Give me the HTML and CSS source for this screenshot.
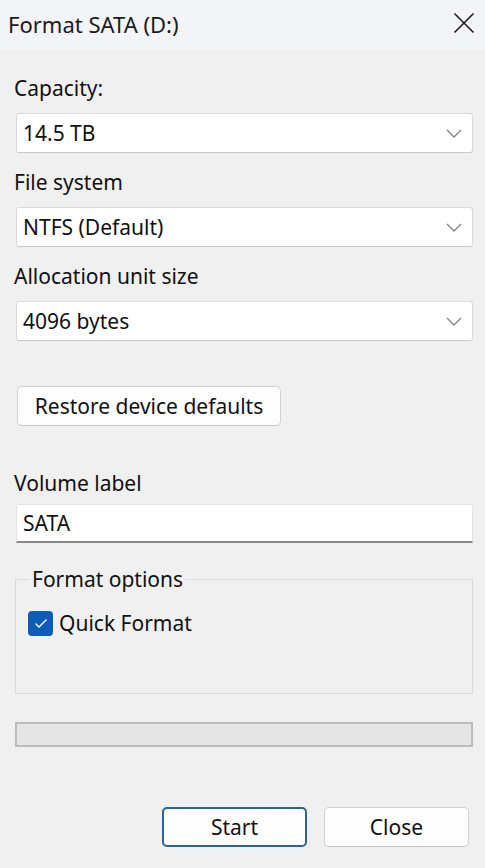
FILE: index.html
```html
<!DOCTYPE html>
<html lang="en">
<head>
<meta charset="utf-8">
<title>Format SATA (D:)</title>
<link rel="stylesheet" href="styles.css">
</head>
<body>
<div class="dialog">
  <header class="titlebar">
    <span class="title">Format SATA (D:)</span>
    <span class="close-x" aria-label="Close">
      <svg width="22" height="22" viewBox="0 0 22 22"><path d="M1.5 1.5 L20.5 20.5 M20.5 1.5 L1.5 20.5" stroke="#1b1b1b" stroke-width="1.6" fill="none"/></svg>
    </span>
  </header>

  <main class="content">
    <div class="label first">Capacity:</div>
    <div class="combo"><span>14.5 TB</span><svg class="chev" width="16" height="9" viewBox="0 0 16 9"><path d="M1 1 L8 8 L15 1" stroke="#808080" stroke-width="1.3" fill="none"/></svg></div>

    <div class="label">File system</div>
    <div class="combo"><span>NTFS (Default)</span><svg class="chev" width="16" height="9" viewBox="0 0 16 9"><path d="M1 1 L8 8 L15 1" stroke="#808080" stroke-width="1.3" fill="none"/></svg></div>

    <div class="label">Allocation unit size</div>
    <div class="combo"><span>4096 bytes</span><svg class="chev" width="16" height="9" viewBox="0 0 16 9"><path d="M1 1 L8 8 L15 1" stroke="#808080" stroke-width="1.3" fill="none"/></svg></div>

    <button class="btn restore" type="button">Restore device defaults</button>

    <div class="label volume">Volume label</div>
    <div class="textbox">SATA</div>

    <fieldset class="group">
      <legend>Format options</legend>
      <label class="check">
        <span class="box"><svg width="14" height="11" viewBox="0 0 14 11"><path d="M1.5 5.5 L5 9 L12.5 1.5" stroke="#ffffff" stroke-width="1.3" fill="none"/></svg></span>
        <span>Quick Format</span>
      </label>
    </fieldset>

    <div class="progress"></div>

    <div class="actions">
      <button class="btn default" type="button">Start</button>
      <button class="btn" type="button">Close</button>
    </div>
  </main>
</div>
</body>
</html>
```

FILE: styles.css
```css
html, body {
  margin: 0;
  padding: 0;
}
body {
  background: #f0f0f0;
  font-family: "Noto Sans", "Open Sans", sans-serif;
  font-size: 21px;
  color: #111;
  width: 485px;
  height: 868px;
  overflow: hidden;
}
.dialog {
  display: flex;
  flex-direction: column;
}
.titlebar {
  height: 50px;
  background: #f3f4f7;
  display: flex;
  align-items: center;
  justify-content: space-between;
  padding: 0 10px 0 8px;
  box-sizing: border-box;
}
.title {
  font-size: 22px;
  color: #1a1a1a;
  margin-top: -2px;
}
.close-x {
  display: flex;
  margin-top: -4px;
}
.content {
  padding: 0 12px 0 15px;
  display: flex;
  flex-direction: column;
}
.label {
  height: 24px;
  line-height: 24px;
  margin-top: 17px;
  margin-left: -1px;
}
.label.first {
  margin-top: 26px;
}
.combo {
  margin-top: 13px;
  height: 40px;
  box-sizing: border-box;
  background: #fff;
  border: 1px solid #dadada;
  border-bottom-color: #c8c8c8;
  border-radius: 3px;
  margin-left: 1px;
  display: flex;
  align-items: center;
  justify-content: space-between;
  padding: 0 10px 0 6px;
}
.chev {
  display: block;
}
.btn {
  font-family: inherit;
  font-size: 21px;
  color: #111;
  background: #fdfdfd;
  border: 1px solid #d0d0d0;
  border-bottom-color: #c2c2c2;
  border-radius: 5px;
  height: 40px;
  padding: 0;
  box-sizing: border-box;
}
.restore {
  margin-top: 45px;
  margin-left: 2px;
  width: 264px;
}
.label.volume {
  margin-top: 45px;
}
.textbox {
  margin-top: 9px;
  margin-left: 1px;
  height: 39px;
  box-sizing: border-box;
  background: #fff;
  border: 1px solid #e4e4e4;
  border-bottom: 2px solid #8a8a8a;
  border-radius: 3px 3px 0 0;
  padding: 0 6px;
  display: flex;
  align-items: center;
}
.group {
  margin: 25px 0 0 0;
  padding: 19px 12px 0 12px;
  height: 126px;
  box-sizing: border-box;
  border: 1px solid #dcdcdc;
  min-width: 0;
}
.group legend {
  padding: 0 2px;
  margin-left: 2px;
  line-height: 22px;
}
.check {
  display: flex;
  align-items: center;
  gap: 6px;
  margin-left: 0;
}
.box {
  width: 25px;
  height: 25px;
  border-radius: 4px;
  background: #0f5bb8;
  display: flex;
  align-items: center;
  justify-content: center;
}
.box svg {
  display: block;
}
.progress {
  margin-top: 28px;
  height: 25px;
  box-sizing: border-box;
  border: 2px solid #bcbcbc;
  background: #e5e5e5;
}
.actions {
  margin-top: 60px;
  display: flex;
  justify-content: flex-end;
  gap: 17px;
  padding-right: 4px;
}
.actions .btn {
  width: 145px;
}
.btn.default {
  border: 2px solid #2a64a0;
}
```
